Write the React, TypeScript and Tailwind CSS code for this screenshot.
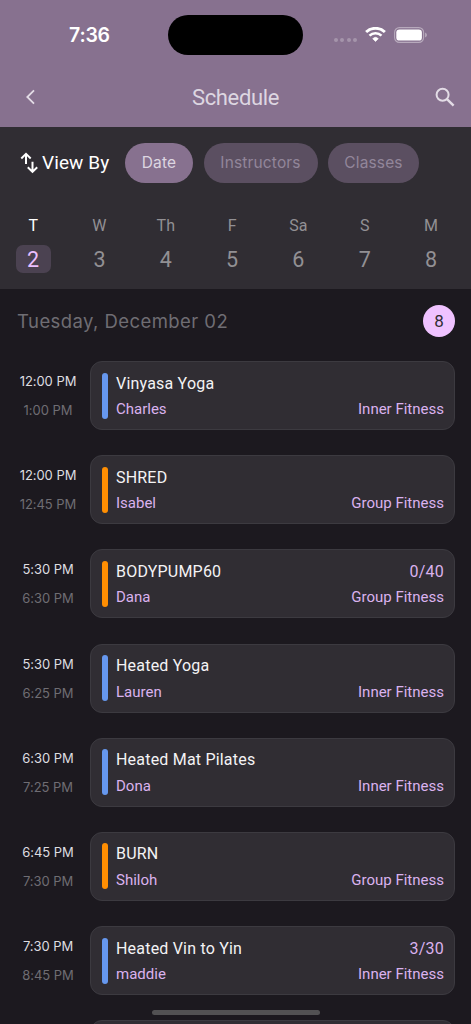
import clsx from 'clsx'

const FILTERS = [
  { label: 'Date', width: 'w-[68px]' },
  { label: 'Instructors', width: 'w-[114px]' },
  { label: 'Classes', width: 'w-[91px]' },
]

const DAYS = [
  { label: 'T', date: 2 },
  { label: 'W', date: 3 },
  { label: 'Th', date: 4 },
  { label: 'F', date: 5 },
  { label: 'Sa', date: 6 },
  { label: 'S', date: 7 },
  { label: 'M', date: 8 },
]

interface FitnessClass {
  start: string
  end: string
  name: string
  instructor: string
  category: 'Inner Fitness' | 'Group Fitness'
  spots?: string
}

const CLASSES: FitnessClass[] = [
  { start: '12:00 PM', end: '1:00 PM', name: 'Vinyasa Yoga', instructor: 'Charles', category: 'Inner Fitness' },
  { start: '12:00 PM', end: '12:45 PM', name: 'SHRED', instructor: 'Isabel', category: 'Group Fitness' },
  { start: '5:30 PM', end: '6:30 PM', name: 'BODYPUMP60', instructor: 'Dana', category: 'Group Fitness', spots: '0/40' },
  { start: '5:30 PM', end: '6:25 PM', name: 'Heated Yoga', instructor: 'Lauren', category: 'Inner Fitness' },
  { start: '6:30 PM', end: '7:25 PM', name: 'Heated Mat Pilates', instructor: 'Dona', category: 'Inner Fitness' },
  { start: '6:45 PM', end: '7:30 PM', name: 'BURN', instructor: 'Shiloh', category: 'Group Fitness' },
  { start: '7:30 PM', end: '8:45 PM', name: 'Heated Vin to Yin', instructor: 'maddie', category: 'Inner Fitness', spots: '3/30' },
]

function StatusBar() {
  return (
    <div className="flex h-[70px] shrink-0 items-center">
      <div className="w-[168px] pl-[69px] font-['Inter',sans-serif] text-[19.5px] font-semibold leading-6 tracking-[-0.2px] text-white">
        7:36
      </div>
      <div className="h-10 w-[135px] rounded-full bg-black" />
      <div className="ml-[31px] mt-[10px] flex gap-[2.4px]">
        {[0, 1, 2, 3].map((i) => (
          <span key={i} className="size-1 rounded-full bg-white/25" />
        ))}
      </div>
      <svg className="-mt-px ml-2 h-[15px] w-[21px]" viewBox="0 0 21 15" fill="none">
        <path d="M1.1 5.1a13.4 13.4 0 0 1 18.8 0" stroke="#fff" strokeWidth="2.8" />
        <path d="M4.5 8.7a8.5 8.5 0 0 1 12 0" stroke="#fff" strokeWidth="2.5" />
        <path d="M10.5 14.5 7.7 11.7a4 4 0 0 1 5.6 0Z" fill="#fff" stroke="#fff" strokeWidth="0.6" strokeLinejoin="round" />
      </svg>
      <svg className="-mt-px ml-[8px] h-4 w-[34px]" viewBox="0 0 34 16" fill="none">
        <rect x="0.6" y="0.6" width="29" height="14.8" rx="4.8" stroke="#fff" strokeOpacity="0.4" strokeWidth="1.1" />
        <rect x="2.3" y="2.4" width="25.6" height="11.2" rx="3.2" fill="#fff" />
        <path d="M31.2 5.5v5c1-.4 1.6-1.4 1.6-2.5s-.6-2.1-1.6-2.5Z" fill="#fff" fillOpacity="0.45" />
      </svg>
    </div>
  )
}

function Header() {
  return (
    <div className="flex h-14 shrink-0 items-center justify-between pl-[25px] pr-4">
      <svg className="-mt-0.5 h-4 w-3" viewBox="0 0 12 16" fill="none">
        <path d="M9 1.3 2.3 8 9 14.7" stroke="#e3dce6" strokeWidth="1.8" />
      </svg>
      <h1 className="pr-[1px] text-[22px] leading-7 tracking-[-0.35px] text-[#ddd6e1]">Schedule</h1>
      <svg className="-mt-[3px] size-5" viewBox="0 0 20 20" fill="none" stroke="#e3dce6" strokeWidth="2">
        <circle cx="7.6" cy="7.7" r="6" />
        <path d="m12 12.1 6.6 6.6" strokeWidth="2.4" />
      </svg>
    </div>
  )
}

function Filters() {
  return (
    <div className="flex items-center pl-5">
      <svg className="h-[22px] w-[18px]" viewBox="0 0 18 22" fill="none" stroke="#fff" strokeWidth="2">
        <path d="M6 12V2.2M1.3 6.5 6 1.9l4.7 4.6M12.5 9.7v9.8M7.8 15.3l4.7 4.6 4.7-4.6" />
      </svg>
      <span className="w-[87px] pl-1 pt-px text-[19px] leading-6 tracking-[0.1px] text-white">View By</span>
      <div className="flex gap-[10.5px] font-['Inter',sans-serif] text-[15.5px] tracking-[0.15px]">
        {FILTERS.map((filter, i) => (
          <button
            key={filter.label}
            className={clsx(
              'h-10 rounded-full',
              filter.width,
              i === 0 ? 'bg-[#87718f] text-[#ddd6e1]' : 'bg-[#5b4f61] text-[#92869a]'
            )}
          >
            {filter.label}
          </button>
        ))}
      </div>
    </div>
  )
}

function WeekStrip() {
  return (
    <div className="mt-[31px] grid w-[464.2px] grid-cols-7">
      {DAYS.map((day, i) => (
        <div key={day.label} className={clsx('flex flex-col items-center', i === 0 ? 'text-white' : 'text-[#929094]')}>
          <span className="text-base leading-6">{day.label}</span>
          <span
            className={clsx(
              'mt-[7.5px] flex h-7 w-[35px] items-center justify-center rounded-[7px] pt-0.5 text-[21.5px]',
              i === 0 && 'bg-[#4b4251] text-[#eabfff]'
            )}
          >
            {day.date}
          </span>
        </div>
      ))}
    </div>
  )
}

function ClassRow({ item }: { item: FitnessClass }) {
  return (
    <div className="flex h-[69px]">
      <div className="flex w-[90px] flex-col items-center pl-[6px] pt-[10px] font-['Inter',sans-serif] text-[13px] leading-5 tracking-[-0.05px]">
        <span className="text-[#dedde0]">{item.start}</span>
        <span className="mt-[9px] text-[#6f6d73]">{item.end}</span>
      </div>
      <div className="flex flex-1 rounded-xl border border-[#3c3a40] bg-[#302d33] py-[10.5px] pl-[10.5px] pr-2.5">
        <div
          className={clsx(
            'h-[46px] w-1.5 rounded-full',
            item.category === 'Inner Fitness' ? 'bg-[#6697ee]' : 'bg-[#ff8e02]'
          )}
        />
        <div className="ml-[8.5px] flex-1">
          <div className="flex justify-between text-base leading-[22px] tracking-[0.2px]">
            <span className="text-[#f4f3f5]">{item.name}</span>
            <span className="text-[#dab2ee]">{item.spots}</span>
          </div>
          <div className="mt-[3.5px] flex justify-between text-[15px] leading-[22px] text-[#dab2ee]">
            <span>{item.instructor}</span>
            <span>{item.category}</span>
          </div>
        </div>
      </div>
    </div>
  )
}

export default function App() {
  return (
    <div className="relative flex h-[1024px] w-[471px] flex-col overflow-hidden bg-[#1c191f] font-['Roboto',sans-serif]">
      <header className="flex h-[126.5px] shrink-0 flex-col bg-[#87718f]">
        <StatusBar />
        <Header />
      </header>

      <section className="h-[162.5px] shrink-0 bg-[#302d33] pt-4">
        <Filters />
        <WeekStrip />
      </section>

      <div className="flex h-[64.5px] shrink-0 items-center justify-between pl-[17px] pr-4">
        <h2 className="pt-px font-['Inter',sans-serif] text-[18.5px] tracking-[0.43px] text-[#6f6d73]">
          Tuesday, December 02
        </h2>
        <span className="flex size-8 items-center justify-center rounded-full bg-[#efc2ff] pt-px text-[17px] text-[#302d33]">
          8
        </span>
      </div>

      <div className="flex flex-col gap-[25.17px] pr-4 pt-[7.6px]">
        {CLASSES.map((item) => (
          <ClassRow key={item.start + item.name} item={item} />
        ))}
        {/* next class, cut off by the bottom of the screen */}
        <div className="ml-[90px] h-[69px] shrink-0 rounded-xl border border-[#3c3a40] bg-[#302d33]" />
      </div>

      {/* home indicator */}
      <div className="absolute bottom-[9px] left-[152px] h-[5.5px] w-[168px] rounded-full bg-[#525153]" />
    </div>
  )
}
